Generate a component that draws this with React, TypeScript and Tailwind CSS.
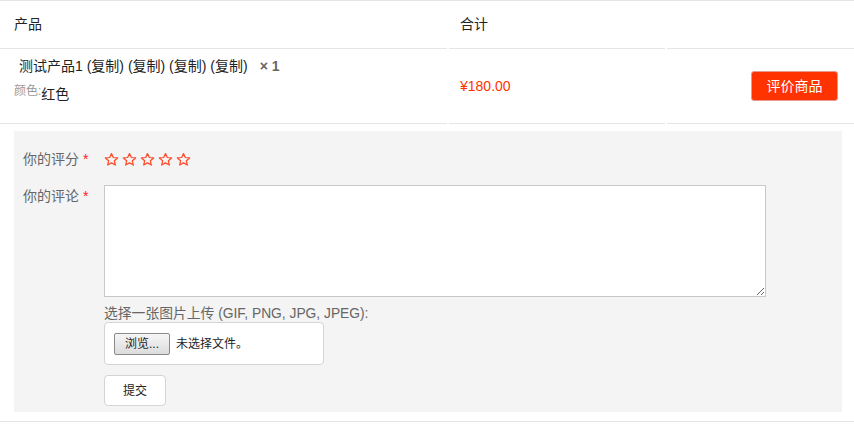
const Star = () => (
  <svg width="15" height="15" viewBox="0 0 24 24" fill="none" stroke="#ff4a2a" strokeWidth="2" strokeLinejoin="round">
    <path d="M12 2.5l2.9 6.3 6.9.7-5.2 4.6 1.5 6.8L12 17.4l-6.1 3.5 1.5-6.8-5.2-4.6 6.9-.7z" />
  </svg>
);

export default function App() {
  return (
    <div className="w-[854px] h-[424px] bg-white text-[#333] text-[13px] font-['Liberation_Sans','Noto_Sans_CJK_SC',sans-serif]">
      <div className="border-t border-[#e5e5e5] flex h-[48px] items-center text-[14px] text-[#222]">
        <div className="w-[447px] pl-[14px]">产品</div>
        <div className="pl-[13px]">合计</div>
      </div>

      <div className="flex h-[76px]">
        <div className="w-[447px] border-t border-b border-[#e5e5e5] pl-[14px] pt-[7px]">
          <div className="pl-[5px] text-[14px] text-[#222]">
            测试产品1 (复制) (复制) (复制) (复制)
            <span className="ml-[12px] font-bold text-[#666]">× 1</span>
          </div>
          <div className="flex items-start mt-[5px]">
            <span className="text-[12px] text-[#999]">颜色:</span>
            <span className="text-[14px] text-[#222] mt-[2px]">红色</span>
          </div>
        </div>
        <div className="w-[216px] ml-[2px] border-t border-b border-[#e5e5e5] pl-[11px] flex items-center text-[14px] text-[#ff3300]">
          ¥180.00
        </div>
        <div className="flex-1 ml-[2px] border-t border-b border-[#e5e5e5] flex items-center justify-end pr-[16px]">
          <button className="w-[87px] h-[30px] bg-[#ff3300] text-white text-[14px] rounded-[3px] border border-[#e89a8a]">
            评价商品
          </button>
        </div>
      </div>

      <div className="mx-[14px] w-[828px] mt-[7px] h-[281px] bg-[#f4f4f4] pl-[9px] pt-[20px]">
        <div className="flex items-center h-[16px]">
          <div className="w-[81px] text-[14px] text-[#666]">
            你的评分 <span className="text-[#ff2020]">*</span>
          </div>
          <div className="flex gap-[3px]">
            <Star />
            <Star />
            <Star />
            <Star />
            <Star />
          </div>
        </div>
        <div className="flex mt-[18px]">
          <div className="w-[81px] text-[14px] text-[#666] pt-[1px]">
            你的评论 <span className="text-[#ff2020]">*</span>
          </div>
          <div>
            <textarea className="block w-[662px] h-[112px] bg-white border border-[#c8c8c8] outline-none" />
            <div className="mt-[9px] text-[13.8px] text-[#666] leading-[16px]">
              选择一张图片上传 (GIF, PNG, JPG, JPEG):
            </div>
            <div className="w-[220px] h-[43px] bg-white border border-[#d4d4d4] rounded-[4px] flex items-center pl-[9px]">
              <span className="w-[56px] h-[22px] border border-[#8a8a8a] rounded-[2px] bg-gradient-to-b from-[#f6f6f6] to-[#dcdcdc] text-[12px] text-[#222] flex items-center justify-center">
                浏览...
              </span>
              <span className="ml-[6px] text-[12px] text-[#222]">未选择文件。</span>
            </div>
            <button className="mt-[10px] w-[62px] h-[31px] bg-white border border-[#d4d4d4] rounded-[4px] text-[12px] text-[#222]">
              提交
            </button>
          </div>
        </div>
      </div>

      <div className="mt-[9px] border-t border-[#e5e5e5]" />
    </div>
  );
}
